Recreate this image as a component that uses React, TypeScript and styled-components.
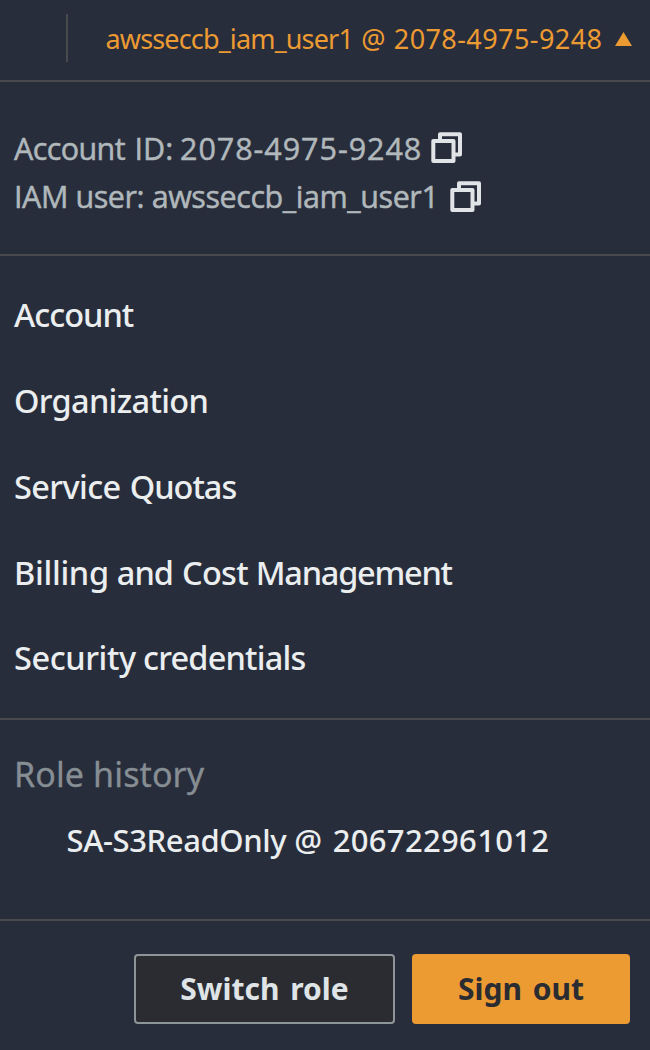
import React from "react";
import styled, { createGlobalStyle } from "styled-components";

const color = {
  panel: "#282d3c",
  line: "#494a4e",
  accent: "#ec9a32",
  text: "#ebeeef",
  soft: "#b0b8bb",
  muted: "#868e94",
  dark: "#2b2c32",
};

const GlobalStyle = createGlobalStyle`
  *, *::before, *::after { box-sizing: border-box; }
  body { margin: 0; background: ${color.panel}; }
  button { font: inherit; }
`;

const Panel = styled.main`
  display: flex;
  flex-direction: column;
  width: 650px;
  height: 1050px;
  overflow: hidden;
  background: ${color.panel};
  font-family: "Noto Sans", "Open Sans", sans-serif;
  white-space: pre;
`;

const Header = styled.header`
  display: flex;
  align-items: flex-start;
  height: 82px;
  padding-left: 66px;
  border-bottom: 2px solid ${color.line};
`;

const Separator = styled.span`
  width: 2px;
  height: 48px;
  margin-top: 14px;
  background: ${color.line};
`;

/* A word with its own tracking; $width is the advance to the next word. */
const Word = styled.span<{ $width?: number; $tracking?: number }>`
  display: inline-block;
  width: ${(p) => (p.$width ? `${p.$width}px` : "auto")};
  letter-spacing: ${(p) => p.$tracking ?? 0}px;
`;

const UserButton = styled.button`
  display: flex;
  align-items: center;
  height: 77px;
  margin: 0 0 0 36.7px;
  padding: 0;
  border: 0;
  background: none;
  color: ${color.accent};
  font-size: 27px;
`;

const Caret = styled.svg`
  display: block;
  width: 17px;
  height: 14px;
  margin-left: 12.3px;
`;

const Section = styled.section<{ $height: number; $top: number }>`
  height: ${(p) => p.$height}px;
  padding: ${(p) => p.$top}px 14px 0;
  border-bottom: 2px solid ${color.line};
`;

const Detail = styled.div`
  display: flex;
  align-items: center;
  height: 48px;
  color: ${color.soft};
  font-family: "Open Sans", "Noto Sans", sans-serif;
  font-size: 30.5px;
  -webkit-text-stroke: 0.5px ${color.soft};
`;

const CopyButton = styled.button<{ $gap: number; $lift?: number }>`
  display: block;
  width: 32px;
  height: 32px;
  margin: 0 0 ${(p) => p.$lift ?? 0}px ${(p) => p.$gap}px;
  padding: 0;
  border: 0;
  background: none;
`;

const Menu = styled.nav`
  display: flex;
  flex-direction: column;
`;

const MenuItem = styled.a`
  height: 85.75px;
  color: ${color.text};
  font-size: 32.5px;
  font-weight: 500;
  line-height: 85.75px;
`;

const RoleTitle = styled.h2`
  margin: 0;
  color: ${color.muted};
  font-size: 34px;
  font-weight: 400;
  line-height: 60px;
  letter-spacing: 0.12px;
  -webkit-text-stroke: 0.3px ${color.muted};
`;

const Role = styled.a`
  display: block;
  margin-top: 6px;
  padding-left: 52.5px;
  color: ${color.text};
  font-size: 31px;
  font-weight: 500;
  line-height: 60px;
`;

const Footer = styled.footer`
  display: flex;
  justify-content: flex-end;
  gap: 17px;
  padding: 33px 20px 0;
`;

const Button = styled.button<{ $primary?: boolean }>`
  width: ${(p) => (p.$primary ? 218 : 261)}px;
  height: 70px;
  padding: 0;
  border: 2px solid ${(p) => (p.$primary ? color.accent : "#8d9599")};
  border-radius: 4px;
  background: ${(p) => (p.$primary ? color.accent : color.dark)};
  color: ${(p) => (p.$primary ? color.dark : "#dfe4e6")};
  font-size: 30px;
  font-weight: 700;
  line-height: 66px;
  word-spacing: 3px;
`;

function CopyIcon() {
  return (
    <svg width="32" height="32" viewBox="0 0 32 32" fill="none" stroke="#e0e4e6" strokeWidth="4" strokeLinejoin="round">
      <path d="M9 9V2.3H29V22.5H22.5" />
      <path d="M2.3 9H22.5V29H2.3Z" />
    </svg>
  );
}

type WordSpec = { text: string; width?: number; tracking?: number };

function Words({ words }: { words: WordSpec[] }) {
  return (
    <>
      {words.map((w) => (
        <Word key={w.text} $width={w.width} $tracking={w.tracking}>
          {w.text}
        </Word>
      ))}
    </>
  );
}

const userName: WordSpec[] = [
  { text: "awsseccb_iam_user1 ", width: 255.3, tracking: -0.85 },
  { text: "@ ", width: 33.8 },
  { text: "2078-4975-9248", tracking: 0.42 },
];

const accountId: WordSpec[] = [
  { text: "Account ", width: 120.5, tracking: -0.6 },
  { text: "ID: ", width: 45.5 },
  { text: "2078-4975-9248", tracking: 0.95 },
];

const menu: WordSpec[][] = [
  [{ text: "Account", tracking: -1 }],
  [{ text: "Organization", tracking: -0.68 }],
  [
    { text: "Service ", width: 115.7, tracking: -0.6 },
    { text: "Quotas", tracking: -1 },
  ],
  [
    { text: "Billing ", width: 102.8, tracking: -0.3 },
    { text: "and ", width: 65.2, tracking: -1 },
    { text: "Cost ", width: 73.8, tracking: -0.7 },
    { text: "Management", tracking: -1.25 },
  ],
  [
    { text: "Security ", width: 129, tracking: -0.4 },
    { text: "credentials", tracking: -0.8 },
  ],
];

const role: WordSpec[] = [
  { text: "SA-S3ReadOnly ", width: 227.8, tracking: -0.4 },
  { text: "@ ", width: 38.4 },
  { text: "206722961012", tracking: 0.33 },
];

export default function App() {
  return (
    <>
      <GlobalStyle />
      <Panel>
        <Header>
          <Separator />
          <UserButton>
            <Words words={userName} />
            <Caret viewBox="0 0 17 14">
              <path d="M8.5 0L17 14H0Z" fill={color.accent} />
            </Caret>
          </UserButton>
        </Header>
        <Section $height={174} $top={42}>
          <Detail>
            <Words words={accountId} />
            <CopyButton $gap={8.6} $lift={2} aria-label="Copy account ID">
              <CopyIcon />
            </CopyButton>
          </Detail>
          <Detail>
            <Word $tracking={-0.43}>IAM user: awsseccb_iam_user1</Word>
            <CopyButton $gap={11.2} aria-label="Copy user name">
              <CopyIcon />
            </CopyButton>
          </Detail>
        </Section>
        <Section $height={464} $top={16.4}>
          <Menu>
            {menu.map((words) => (
              <MenuItem key={words[0].text}>
                <Words words={words} />
              </MenuItem>
            ))}
          </Menu>
        </Section>
        <Section $height={201} $top={23.5}>
          <RoleTitle>Role history</RoleTitle>
          <Role>
            <Words words={role} />
          </Role>
        </Section>
        <Footer>
          <Button>Switch role</Button>
          <Button $primary>Sign out</Button>
        </Footer>
      </Panel>
    </>
  );
}
